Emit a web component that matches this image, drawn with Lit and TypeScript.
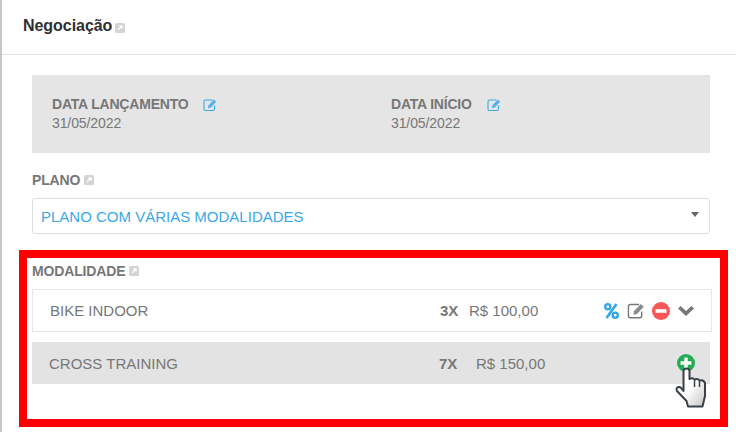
import { LitElement, html, css, svg } from 'lit';
import { customElement } from 'lit/decorators.js';

const extIcon = html`<svg class="ext" viewBox="0 0 10 10" width="10" height="10">
  <rect width="10" height="10" rx="1.5" fill="#d4d4d4"/>
  <path d="M3 7 L6.6 3.4 M4.4 3 H7 V5.6" stroke="#fff" stroke-width="1.3" fill="none"/>
</svg>`;

const editPaths = (c: string) => svg`
  <path d="M9.500 2 H2.500 Q1 2 1 3.500 V11 Q1 12.500 2.500 12.500 H10 Q11.500 12.500 11.500 11 V7.500" fill="none" stroke="${c}" stroke-width="1.100"/>
  <path d="M5.400 7.400 L10.800 1.600 L13.200 3.800 L7.800 9.600 L5 10.200 Z" fill="${c}" opacity="0.85"/>`;

const editIcon = (c: string) => html`<svg viewBox="0 0 14 13.500" width="14" height="13.500">${editPaths(c)}</svg>`;

@customElement('app-root')
export class AppRoot extends LitElement {

  static styles = css`
    :host {
      display: block;
      position: relative;
      width: 736px;
      height: 432px;
      overflow: hidden;
      box-sizing: border-box;
      border-left: 2px solid #c6c6c6;
      background: #fff;
      font-family: "Liberation Sans", Arial, sans-serif;
      font-size: 14px;
      color: #777;
    }

    .head {
      height: 55px;
      box-sizing: border-box;
      border-bottom: 1px solid #e4e4e4;
      padding: 16px 0 0 21px;
      display: flex;
      align-items: flex-start;
      gap: 3px;
      font-size: 16px;
      font-weight: 700;
      line-height: 20px;
      letter-spacing: -0.05px;
      color: #2f2f2f;
    }
    .head .ext { margin-top: 7px; }

    .dates {
      margin: 20px 26px 0 30px;
      height: 78px;
      box-sizing: border-box;
      background: #e5e5e5;
      padding: 21px 0 0 20px;
      display: grid;
      grid-template-columns: 339px 1fr;
      line-height: 17px;
    }
    .dates b {
      display: flex;
      align-items: center;
      color: #777;
      letter-spacing: -0.2px;
    }
    .dates svg { margin-left: 15px; }
    .dates .val { margin-top: 2px; letter-spacing: -0.1px; }

    .label {
      display: flex;
      align-items: center;
      gap: 4px;
      font-weight: 700;
      line-height: 16px;
      color: #777;
      letter-spacing: -0.15px;
    }
    .plano { margin: 19px 26px 0 30px; }

    .select {
      margin-top: 10px;
      height: 36px;
      box-sizing: border-box;
      border: 1px solid #dedede;
      border-radius: 3px;
      padding: 0 10px 0 8px;
      display: flex;
      align-items: center;
      justify-content: space-between;
      font-size: 15px;
      color: #3aa8e6;
    }
    .caret {
      width: 0;
      height: 0;
      border: 4px solid transparent;
      border-top: 5px solid #666;
      border-bottom: 0;
      margin-top: -3px;
    }

    .frame {
      margin: 16px 0 0 17px;
      width: 709px;
      height: 177px;
      box-sizing: border-box;
      border: 8px solid #ff0000;
      padding: 5px 0 0 5px;
    }

    .row {
      display: grid;
      align-items: center;
      box-sizing: border-box;
      font-size: 15px;
    }
    .row-a {
      margin-top: 10px;
      width: 680px;
      height: 43px;
      border: 1px solid #e2e8e8;
      padding-left: 17px;
      grid-template-columns: 390px 29px 135px 1fr;
    }
    .row-b {
      margin-top: 10px;
      width: 678px;
      height: 42px;
      background: #e3e3e3;
      padding-left: 17px;
      grid-template-columns: 390px 37px 201px 1fr;
    }
    .row b { color: #777; }

    .actions {
      display: flex;
      align-items: center;
    }
    .actions .pct { margin-right: 8px; }
    .actions .edit { margin-right: 7px; }
    .actions .minus { margin-right: 8px; }

    .cursor {
      position: absolute;
      left: 673px;
      top: 367px;
    }
  `;

  render() {
    return html`
      <div class="head">Negociação ${extIcon}</div>

      <div class="dates">
        <div>
          <b>DATA LANÇAMENTO ${editIcon('#3aa8e6')}</b>
          <div class="val">31/05/2022</div>
        </div>
        <div>
          <b>DATA INÍCIO ${editIcon('#3aa8e6')}</b>
          <div class="val">31/05/2022</div>
        </div>
      </div>

      <div class="plano">
        <div class="label">PLANO ${extIcon}</div>
        <div class="select">PLANO COM VÁRIAS MODALIDADES <span class="caret"></span></div>
      </div>

      <div class="frame">
        <div class="label">MODALIDADE ${extIcon}</div>

        <div class="row row-a">
          <span>BIKE INDOOR</span>
          <b>3X</b>
          <span>R$ 100,00</span>
          <div class="actions">
            <svg class="pct" viewBox="0 0 15 16" width="15" height="16">
              <circle cx="3.800" cy="3.800" r="2.600" fill="none" stroke="#2ba6e8" stroke-width="2.300"/>
              <circle cx="11.200" cy="12.200" r="2.600" fill="none" stroke="#2ba6e8" stroke-width="2.300"/>
              <path d="M12.500 1 L2.500 15" stroke="#2ba6e8" stroke-width="2.500"/>
            </svg>
            <svg class="edit" viewBox="0 0 14 13.500" width="18" height="17">${editPaths('#777')}</svg>
            <svg class="minus" viewBox="0 0 18 18" width="18" height="18">
              <circle cx="9" cy="9" r="9" fill="#f95656"/>
              <rect x="3.500" y="7.200" width="11" height="3.600" fill="#fff"/>
            </svg>
            <svg viewBox="0 0 16 10" width="16" height="10">
              <path d="M0 2.600 L2.600 0 L8 5 L13.400 0 L16 2.600 L8 10 Z" fill="#777"/>
            </svg>
          </div>
        </div>

        <div class="row row-b">
          <span>CROSS TRAINING</span>
          <b>7X</b>
          <span>R$ 150,00</span>
          <svg viewBox="0 0 18 18" width="18" height="18">
            <circle cx="9" cy="9" r="9" fill="#22ac55"/>
            <path d="M3.500 9 H14.500 M9 3.500 V14.500" stroke="#fff" stroke-width="3.400"/>
          </svg>
        </div>
      </div>

      <svg class="cursor" viewBox="0 0 32 41" width="32" height="41">
        <defs>
          <linearGradient id="hand" x1="0" y1="0" x2="1" y2="1">
            <stop offset="0.5" stop-color="#fff"/>
            <stop offset="1" stop-color="#c4c4c4"/>
          </linearGradient>
        </defs>
        <path d="M8.500 24 V4 Q8.500 1.500 11.500 1.500 Q14.500 1.500 14.500 4 V12 Q18 10.500 19.500 12.500 Q23 11 24.500 13.500 Q28.500 12.500 30 16 V29 L27.500 39.500 H13 L11.500 34 L2 24 Q0.500 21 3.500 20 Q6 19.500 8.500 24 Z"
          fill="url(#hand)" stroke="#3b4148" stroke-width="2" stroke-linejoin="round"/>
        <path d="M19.500 13 V20 M24.500 14 V20" stroke="#3b4148" stroke-width="1.500" fill="none"/>
      </svg>
    `;
  }

}
